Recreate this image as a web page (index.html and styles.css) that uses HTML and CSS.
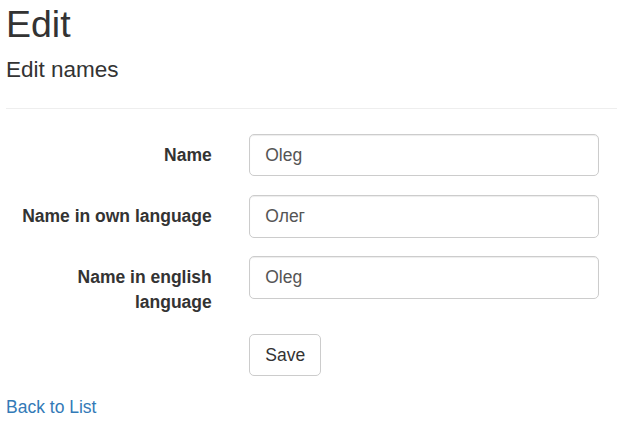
FILE: index.html
```html
<!DOCTYPE html>
<html lang="en">
<head>
<meta charset="utf-8">
<title>Edit</title>
<link rel="stylesheet" href="styles.css">
</head>
<body>
<div class="page">
  <h2 class="title">Edit</h2>
  <form class="form-horizontal">
    <h4 class="subtitle">Edit names</h4>
    <hr class="divider">
    <div class="form-group">
      <label class="control-label" for="Name">Name</label>
      <div class="control-col">
        <input class="form-control" id="Name" type="text" value="Oleg">
      </div>
    </div>
    <div class="form-group">
      <label class="control-label" for="NameOwn">Name in own language</label>
      <div class="control-col">
        <input class="form-control" id="NameOwn" type="text" value="Олег">
      </div>
    </div>
    <div class="form-group">
      <label class="control-label" for="NameEn">Name in english language</label>
      <div class="control-col">
        <input class="form-control" id="NameEn" type="text" value="Oleg">
      </div>
    </div>
    <div class="form-group">
      <div class="control-label"></div>
      <div class="control-col">
        <button type="submit" class="btn">Save</button>
      </div>
    </div>
  </form>
  <div class="back">
    <a href="#" class="link">Back to List</a>
  </div>
</div>
</body>
</html>
```

FILE: styles.css
```css
html, body {
  margin: 0;
  padding: 0;
  background: #fff;
}

body {
  font-family: "Liberation Sans", Arial, Helvetica, sans-serif;
  font-size: 17.5px;
  line-height: 25px;
  color: #333;
}

.page {
  padding: 4.25px 0 0 6px;
}

.title {
  margin: 0 0 12.5px;
  font-size: 37.5px;
  line-height: 1.1;
  font-weight: 500;
}

.form-horizontal {
  margin: 0;
}

.subtitle {
  margin: 12.5px 0 12.5px;
  font-size: 22.5px;
  line-height: 1.1;
  font-weight: 500;
}

.divider {
  margin: 25px 0 25px;
  border: 0;
  border-top: 1px solid #eee;
  height: 0;
}

.form-group {
  display: grid;
  grid-template-columns: 224.5px 1fr;
  margin-bottom: 18.75px;
}

.control-label {
  display: block;
  box-sizing: border-box;
  padding: 8.75px 18.75px 0 0;
  text-align: right;
  font-weight: 700;
}

.control-col {
  padding-left: 18.75px;
}

.form-control {
  display: block;
  box-sizing: border-box;
  width: 100%;
  max-width: 350px;
  height: 42.5px;
  margin: 0;
  padding: 7.5px 15px;
  font-family: inherit;
  font-size: 17.5px;
  line-height: 25px;
  color: #555;
  background: #fff;
  border: 1px solid #ccc;
  border-radius: 5px;
  box-shadow: inset 0 1px 1px rgba(0, 0, 0, 0.075);
}

.btn {
  display: inline-block;
  box-sizing: border-box;
  height: 42.5px;
  margin: 0;
  padding: 7.5px 15px;
  font-family: inherit;
  font-size: 17.5px;
  line-height: 25px;
  color: #333;
  background: #fff;
  border: 1px solid #ccc;
  border-radius: 5px;
  cursor: pointer;
}

.back {
  line-height: 25px;
}

.link {
  color: #337ab7;
  text-decoration: none;
}
```
